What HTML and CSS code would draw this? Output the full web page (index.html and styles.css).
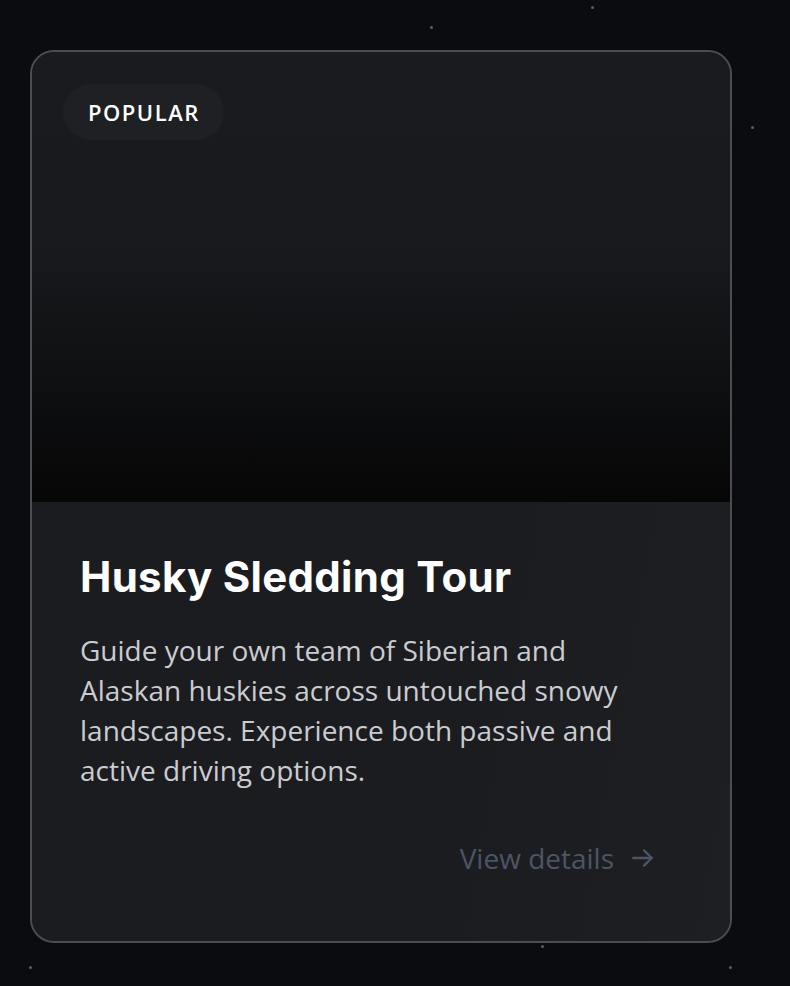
FILE: index.html
```html
<!DOCTYPE html>
<html lang="en">
<head>
<meta charset="utf-8">
<title>Husky Sledding Tour</title>
<link rel="stylesheet" href="styles.css">
</head>
<body>
<div class="stars">
  <span class="star" style="left:430px;top:26px"></span>
  <span class="star" style="left:591px;top:6px"></span>
  <span class="star" style="left:751px;top:126px"></span>
  <span class="star" style="left:541px;top:945px"></span>
  <span class="star" style="left:29px;top:966px"></span>
  <span class="star" style="left:729px;top:966px"></span>
</div>
<main class="page">
  <article class="card">
    <div class="media">
      <span class="badge">POPULAR</span>
    </div>
    <div class="content">
      <h2 class="title">Husky Sledding Tour</h2>
      <p class="desc">Guide your own team of Siberian and Alaskan huskies across untouched snowy landscapes. Experience both passive and active driving options.</p>
      <div class="actions">
        <a class="link" href="#">View details
          <svg class="arrow" viewBox="0 0 24 24" width="24" height="24" fill="none" stroke="currentColor" stroke-width="2.2" stroke-linecap="round" stroke-linejoin="round"><path d="M3 12h17"/><path d="M13 5l7 7-7 7"/></svg>
        </a>
      </div>
    </div>
  </article>
</main>
</body>
</html>
```
FILE: styles.css
```css
* { box-sizing: border-box; }
html, body { margin: 0; padding: 0; }
body {
  background: #0a0c10;
  font-family: "Open Sans", "Noto Sans", sans-serif;
  width: 790px;
  height: 986px;
  overflow: hidden;
  position: relative;
}
.stars { position: absolute; inset: 0; pointer-events: none; }
.star {
  position: absolute;
  width: 3px;
  height: 3px;
  border-radius: 50%;
  background: #5b5e66;
}
.page {
  padding: 50px 0 0 30px;
}
.card {
  width: 702px;
  height: 893px;
  border: 2px solid #4c4d52;
  border-radius: 24px;
  overflow: hidden;
  background: #1b1c1f;
  display: flex;
  flex-direction: column;
  position: relative;
}
.media {
  height: 450px;
  flex: none;
  position: relative;
  background: linear-gradient(to bottom, #1a1b1e 0%, #18191c 45%, #0e0f11 75%, #060606 100%);
}
.badge {
  position: absolute;
  top: 32px;
  left: 31px;
  height: 56px;
  padding: 0 24px 0 25px;
  display: flex;
  align-items: center;
  border-radius: 28px;
  background: #1f2023;
  color: #ffffff;
  font-family: "Open Sans", sans-serif;
  font-weight: 600;
  font-size: 22px;
  letter-spacing: 1.5px;
}
.content {
  flex: 1;
  padding: 48px 74px 0 48px;
  background: linear-gradient(100deg, #1b1c1f 0%, #1b1c1f 60%, #1d1f22 100%);
}
.title {
  margin: 0;
  font-family: "Inter", "Noto Sans", sans-serif;
  font-weight: 700;
  font-size: 42px;
  line-height: 54px;
  letter-spacing: 0.3px;
  color: #ffffff;
}
.desc {
  margin: 26px 0 0;
  font-size: 28px;
  line-height: 40px;
  color: #cbccd0;
}
.actions {
  display: flex;
  justify-content: flex-end;
  margin-top: 50px;
}
.link {
  display: flex;
  align-items: center;
  gap: 16px;
  color: #4b5565;
  text-decoration: none;
  font-size: 28px;
  line-height: 36px;
}
.arrow { width: 26px; height: 26px; }
```
